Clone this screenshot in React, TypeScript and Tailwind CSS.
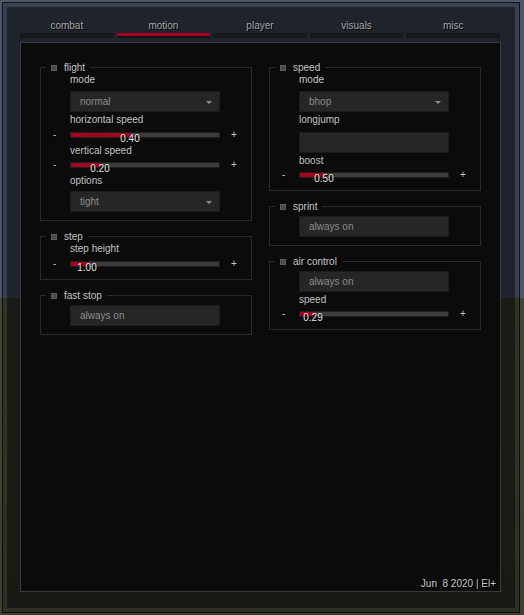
import React from 'react';

const shadow = '[text-shadow:1px_1px_0_#000]';

const Label: React.FC<{ text: string; className?: string }> = ({ text, className = '' }) => (
    <div className={`h-[12px] leading-[12px] text-[10px] text-[#c8c8c8] ${shadow} ${className}`}>{text}</div>
);

const Box: React.FC<{ text?: string; arrow?: boolean; className?: string }> = ({ text, arrow, className = '' }) => (
    <div className={`relative flex h-[21px] w-[150px] items-center border border-[#1b1b1b] bg-[#262626] pl-[9px] text-[10px] leading-[12px] text-[#8c8c8c] ${className}`}>
        {text}
        {arrow && (
            <svg className="absolute right-[7px] top-[9px]" width="6" height="3" viewBox="0 0 6 3">
                <path d="M0 0H6L3 3Z" fill="#8c8c8c" />
            </svg>
        )}
    </div>
);

const Slider: React.FC<{ value: string; fill: number; className?: string }> = ({ value, fill, className = '' }) => (
    <div className={`relative h-[6px] w-[150px] ${className}`}>
        <span className={`absolute left-[-17px] top-[-3px] text-[10px] leading-[12px] text-[#c8c8c8] ${shadow}`}>-</span>
        <div className="h-full overflow-hidden border border-[#1e1e1e] bg-[#3d3d3d]">
            <div className="h-full bg-[#a5001f]" style={{ width: fill }} />
        </div>
        <span
            className={`absolute top-[1px] -translate-x-1/2 text-[10px] leading-[12px] text-[#e6e6e6] ${shadow}`}
            style={{ left: fill }}
        >
            {value}
        </span>
        <span className={`absolute left-[161px] top-[-3px] text-[10px] leading-[12px] text-[#c8c8c8] ${shadow}`}>+</span>
    </div>
);

const Group: React.FC<{ title: string; className?: string; children: React.ReactNode }> = ({ title, className = '', children }) => (
    <div className={`relative flex flex-col border border-[#2a2a2a] pl-[29px] ${className}`}>
        <div className="absolute left-[5px] top-[-7px] flex h-[13px] items-center gap-[7px] bg-[#0b0b0b] px-[5px]">
            <span className="h-[6px] w-[6px] border border-[#5c5c5c] bg-[#4a4a4a]" />
            <span className={`text-[10px] leading-[12px] text-[#c8c8c8] ${shadow}`}>{title}</span>
        </div>
        {children}
    </div>
);

const tabs = ['combat', 'motion', 'player', 'visuals', 'misc'];

export default function App() {
    return (
        <div className="h-[615px] w-[524px] overflow-hidden bg-[linear-gradient(to_bottom,#4e566a_0,#4e566a_298px,#3f4636_298px,#3a4132_100%)] pl-[2px] pt-[2px] font-['Liberation_Sans',Arial,sans-serif]">
            <div className="h-[611px] w-[518px] border border-black/70 bg-black/25 p-[4px]">
                <div className="flex h-full flex-col bg-black/45 pl-[13px] pt-[13px]">
                    {/* tabs */}
                    <div className="grid w-[480px] grid-cols-5 gap-[3px]">
                        {tabs.map((t) => (
                            <div key={t} className="flex flex-col items-center">
                                <div className={`h-[12px] text-[10px] leading-[12px] text-[#a9a9a9] ${shadow}`}>{t}</div>
                                <div className={`mt-[1px] h-[5px] w-full ${t === 'motion' ? 'border-b-2 border-[#141414] bg-[#a5001f]' : 'bg-[#191919]'}`} />
                            </div>
                        ))}
                    </div>

                    {/* panel */}
                    <div className="mt-[4px] flex h-[550px] w-[481px] flex-col border border-[#3a3a3a] bg-[#0b0b0b] px-[19px] pt-[24px]">
                        <div className="grid grid-cols-2 items-start gap-[17px]">
                            <div className="flex flex-col gap-[15px]">
                                <Group title="flight" className="pb-[8px] pt-[6px]">
                                    <Label text="mode" />
                                    <Box text="normal" arrow className="mt-[5px]" />
                                    <Label text="horizontal speed" className="mt-[2px]" />
                                    <Slider value="0.40" fill={60} className="mt-[6px]" />
                                    <Label text="vertical speed" className="mt-[7px]" />
                                    <Slider value="0.20" fill={30} className="mt-[5px]" />
                                    <Label text="options" className="mt-[7px]" />
                                    <Box text="tight" arrow className="mt-[4px]" />
                                </Group>
                                <Group title="step" className="pb-[12px] pt-[6px]">
                                    <Label text="step height" />
                                    <Slider value="1.00" fill={17} className="mt-[6px]" />
                                </Group>
                                <Group title="fast stop" className="pb-[8px] pt-[9px]">
                                    <Box text="always on" />
                                </Group>
                            </div>
                            <div className="flex flex-col gap-[15px]">
                                <Group title="speed" className="pb-[12px] pt-[6px]">
                                    <Label text="mode" />
                                    <Box text="bhop" arrow className="mt-[5px]" />
                                    <Label text="longjump" className="mt-[2px]" />
                                    <Box className="mt-[6px]" />
                                    <Label text="boost" className="mt-[2px]" />
                                    <Slider value="0.50" fill={25} className="mt-[5px]" />
                                </Group>
                                <Group title="sprint" className="pb-[8px] pt-[9px]">
                                    <Box text="always on" />
                                </Group>
                                <Group title="air control" className="pb-[12px] pt-[9px]">
                                    <Box text="always on" />
                                    <Label text="speed" className="mt-[2px]" />
                                    <Slider value="0.29" fill={14} className="mt-[5px]" />
                                </Group>
                            </div>
                        </div>
                        <div className={`mr-[-15px] mt-auto self-end whitespace-pre pb-[1px] text-[10px] leading-[12px] text-[#c8c8c8] ${shadow}`}>
                            Jun  8 2020 | El+
                        </div>
                    </div>
                </div>
            </div>
        </div>
    );
}
